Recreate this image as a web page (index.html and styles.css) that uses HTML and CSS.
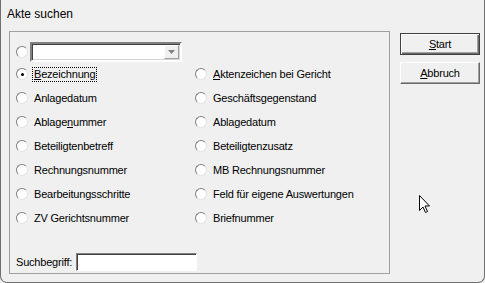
FILE: index.html
```html
<!DOCTYPE html>
<html>
<head>
<meta charset="utf-8">
<link rel="stylesheet" href="styles.css">
</head>
<body>
<div class="window">
  <div class="title">Akte suchen</div>
  <div class="content">
    <div class="group">
      <div class="combo-row">
        <span class="radio"></span>
        <div class="combo"><span class="combo-btn"><svg width="7" height="4" viewBox="0 0 7 4"><path d="M0 0h7L3.5 4z" fill="#808080"/></svg></span></div>
      </div>
      <div class="grid">
        <label class="opt"><span class="radio checked"></span><span class="txt focus"><u>B</u>ezeichnung</span></label>
        <label class="opt"><span class="radio"></span><span class="txt"><u>A</u>ktenzeichen bei Gericht</span></label>
        <label class="opt"><span class="radio"></span><span class="txt">Anlagedatum</span></label>
        <label class="opt"><span class="radio"></span><span class="txt">Geschäftsgegenstand</span></label>
        <label class="opt"><span class="radio"></span><span class="txt">Ablage<u>n</u>ummer</span></label>
        <label class="opt"><span class="radio"></span><span class="txt">Ablagedatum</span></label>
        <label class="opt"><span class="radio"></span><span class="txt">Beteiligtenbetreff</span></label>
        <label class="opt"><span class="radio"></span><span class="txt">Beteiligtenzusatz</span></label>
        <label class="opt"><span class="radio"></span><span class="txt">Rechnungsnummer</span></label>
        <label class="opt"><span class="radio"></span><span class="txt">MB Rechnungsnummer</span></label>
        <label class="opt"><span class="radio"></span><span class="txt">Bearbeitungsschritte</span></label>
        <label class="opt"><span class="radio"></span><span class="txt">Feld für eigene Auswertungen</span></label>
        <label class="opt"><span class="radio"></span><span class="txt">ZV Gerichtsnummer</span></label>
        <label class="opt"><span class="radio"></span><span class="txt">Briefnummer</span></label>
      </div>
      <div class="search">
        <span class="txt">Suchbegriff:</span>
        <span class="input"></span>
      </div>
    </div>
    <div class="buttons">
      <div class="btn default"><u>S</u>tart</div>
      <div class="btn"><u>A</u>bbruch</div>
    </div>
  </div>
  <svg class="cursor" width="12" height="19" viewBox="0 0 12 19">
    <path d="M0.5 0.5V15.5L4 12L6.5 17.5L8.5 16.5L6 11H10.5Z" fill="#fff" stroke="#000" stroke-width="1"/>
  </svg>
</div>
</body>
</html>
```

FILE: styles.css
```css
html, body {
  margin: 0;
  padding: 0;
  background: #f0f0f0;
}
body {
  font-family: "Liberation Sans", Arial, sans-serif;
  font-size: 11px;
  letter-spacing: -0.2px;
  color: #000;
}
.window {
  position: relative;
  width: 485px;
  height: 283px;
  box-sizing: border-box;
  background: #f0f0f0;
  border: 1px solid #707070;
  border-top: none;
  border-radius: 0 0 7px 7px;
  overflow: hidden;
}
.title {
  height: 31px;
  box-sizing: border-box;
  padding: 6px 0 0 6px;
  font-size: 12px;
  letter-spacing: 0;
  line-height: 16px;
}
.content {
  display: flex;
  padding-left: 8px;
}
.group {
  width: 381px;
  height: 243px;
  box-sizing: border-box;
  border: 1px solid #a0a0a0;
  padding: 10px 0 0 6px;
  display: flex;
  flex-direction: column;
}
.combo-row {
  display: flex;
  align-items: flex-start;
  height: 21px;
}
.combo-row .radio {
  margin-top: 4px;
  margin-right: 2px;
}
.combo {
  width: 152px;
  height: 20px;
  box-sizing: border-box;
  border: 2px solid;
  border-color: #808080 #ffffff #ffffff #808080;
  box-shadow: inset 1px 1px 0 #404040, inset -1px -1px 0 #d4d4d4;
  background: #fff;
  display: flex;
  justify-content: flex-end;
  padding: 1px;
}
.combo-btn {
  width: 15px;
  height: 14px;
  box-sizing: border-box;
  background: #f0f0f0;
  border: 1px solid;
  border-color: #ffffff #a0a0a0 #a0a0a0 #ffffff;
  display: flex;
  align-items: center;
  justify-content: center;
}
.grid {
  margin-top: -1px;
  display: grid;
  grid-template-columns: 179px 1fr;
  grid-auto-rows: 24px;
}
.opt {
  display: flex;
  align-items: center;
  height: 24px;
}
.radio {
  width: 12px;
  height: 12px;
  box-sizing: border-box;
  border-radius: 50%;
  background: #fff;
  border: 1px solid;
  border-color: #808080 #e4e4e4 #e4e4e4 #808080;
  flex: none;
  position: relative;
}
.radio.checked::after {
  content: "";
  position: absolute;
  left: 3.5px;
  top: 3.5px;
  width: 3px;
  height: 3px;
  border-radius: 50%;
  background: #000;
}
.txt {
  margin-left: 6px;
  line-height: 13px;
  white-space: nowrap;
}
.txt.focus {
  outline: 1px dotted #000;
  outline-offset: 0;
  padding: 0 1px;
  margin-left: 5px;
}
u {
  text-decoration: underline;
  text-underline-offset: 1px;
}
.search {
  margin-top: auto;
  margin-bottom: 1px;
  display: flex;
  align-items: center;
  height: 20px;
}
.search .txt {
  margin-left: 0;
}
.search .input {
  margin-left: 4px;
  width: 121px;
  height: 18px;
  box-sizing: border-box;
  background: #fff;
  border: 1px solid;
  border-color: #808080 #ffffff #ffffff #808080;
  box-shadow: inset 1px 1px 0 #404040;
}
.buttons {
  margin-left: 10px;
  display: flex;
  flex-direction: column;
  gap: 7px;
  padding-top: 2px;
}
.btn {
  width: 80px;
  height: 22px;
  box-sizing: border-box;
  display: flex;
  align-items: center;
  justify-content: center;
  background: #f0f0f0;
  border: 1px solid;
  border-color: #ffffff #696969 #696969 #ffffff;
  box-shadow: inset -1px -1px 0 #a0a0a0;
}
.btn.default {
  border: 1px solid #404040;
  box-shadow: inset 1px 1px 0 #ffffff, inset -1px -1px 0 #696969, inset -2px -2px 0 #a0a0a0;
}
.cursor {
  position: absolute;
  left: 418px;
  top: 195px;
}
```
